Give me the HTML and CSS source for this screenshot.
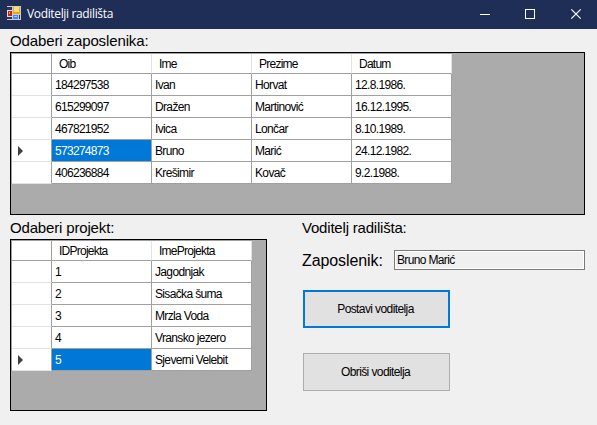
FILE: index.html
```html
<!DOCTYPE html>
<html lang="hr">
<head>
<meta charset="utf-8">
<title>Voditelji radilišta</title>
<link rel="stylesheet" href="styles.css">
</head>
<body>
<header class="titlebar">
  <svg class="app-icon" width="14" height="14" viewBox="0 0 14 14" shape-rendering="crispEdges">
    <rect width="14" height="14" fill="#c9cdd8"/>
    <path d="M0 1h5v3H0zM0 11h5v2H0z" fill="#26345f"/>
    <rect x="0" y="4" width="5" height="7" fill="#f3d5d2"/>
    <rect x="1" y="5" width="4" height="5" fill="#c32318"/>
    <rect x="2" y="6" width="1" height="2" fill="#ef9a90"/>
    <rect x="6" y="1" width="7" height="7" fill="#e8a914"/>
    <rect x="7" y="1" width="5" height="5" fill="#ffdf75"/>
    <rect x="6" y="9" width="5" height="4" fill="#4d86e8"/>
    <rect x="7" y="10" width="3" height="1" fill="#a5c8ff"/>
    <path d="M12 9h1v4h-1z" fill="#26345f"/>
  </svg>
  <h1 class="caption">Voditelji radilišta</h1>
  <svg class="controls" width="116" height="12" viewBox="0 0 116 12" fill="none" stroke="#fff">
    <path d="M0 6.5h10M45.5 1.5h9v9h-9z" shape-rendering="crispEdges"/>
    <path d="M91.3 1.3l9.4 9.4M100.7 1.3l-9.4 9.4" stroke-width="1.2"/>
  </svg>
</header>
<main class="form">
  <h2 class="label label-employees">Odaberi zaposlenika:</h2>
  <section class="grid-box employees">
    <div class="grid cols-4">
      <div class="head corner"></div><div class="head">Oib</div><div class="head">Ime</div><div class="head">Prezime</div><div class="head">Datum</div>
      <div class="rowhead"></div><div class="cell num">184297538</div><div class="cell">Ivan</div><div class="cell">Horvat</div><div class="cell date">12.8.1986.</div>
      <div class="rowhead"></div><div class="cell num">615299097</div><div class="cell">Dražen</div><div class="cell">Martinović</div><div class="cell date">16.12.1995.</div>
      <div class="rowhead"></div><div class="cell num">467821952</div><div class="cell">Ivica</div><div class="cell">Lončar</div><div class="cell date">8.10.1989.</div>
      <div class="rowhead current"></div><div class="cell num selected">573274873</div><div class="cell">Bruno</div><div class="cell">Marić</div><div class="cell date">24.12.1982.</div>
      <div class="rowhead"></div><div class="cell num">406236884</div><div class="cell">Krešimir</div><div class="cell">Kovač</div><div class="cell date">9.2.1988.</div>
    </div>
  </section>
  <div class="lower">
    <div class="projects-pane">
      <h2 class="label label-projects">Odaberi projekt:</h2>
      <section class="grid-box projects">
        <div class="grid cols-2">
          <div class="head corner"></div><div class="head">IDProjekta</div><div class="head">ImeProjekta</div>
          <div class="rowhead"></div><div class="cell num">1</div><div class="cell">Jagodnjak</div>
          <div class="rowhead"></div><div class="cell num">2</div><div class="cell">Sisačka šuma</div>
          <div class="rowhead"></div><div class="cell num">3</div><div class="cell">Mrzla Voda</div>
          <div class="rowhead"></div><div class="cell num">4</div><div class="cell">Vransko jezero</div>
          <div class="rowhead current"></div><div class="cell num selected">5</div><div class="cell">Sjeverni Velebit</div>
        </div>
      </section>
    </div>
    <div class="leader-pane">
      <h2 class="label label-leader">Voditelj radilišta:</h2>
      <div class="field">
        <label class="field-label" for="leader">Zaposlenik:</label>
        <output class="textbox" id="leader">Bruno Marić</output>
      </div>
      <button class="button primary">Postavi voditelja</button>
      <button class="button">Obriši voditelja</button>
    </div>
  </div>
</main>
</body>
</html>
```
FILE: styles.css
```css
* { box-sizing: border-box; }
body {
  margin: 0;
  width: 597px;
  height: 425px;
  overflow: hidden;
  background: #f0f0f0;
  color: #000;
  font: 12px/14px "Liberation Sans", Arial, sans-serif;
  letter-spacing: -0.65px;
}
h1, h2 { margin: 0; font-weight: normal; }
.titlebar {
  display: flex;
  align-items: center;
  height: 29px;
  padding: 0 1px 2px 7px;
  background: #1f2e57;
  color: #fff;
}
.app-icon { margin-bottom: 1px; }
.caption {
  margin-left: 6px;
  font: 12px/16px "Open Sans", "Noto Sans", sans-serif;
  letter-spacing: -0.35px;
}
.controls { margin-left: auto; }
.form { padding: 0 12px 0 10px; }
.label {
  height: 24px;
  font-size: 15px;
  line-height: 25px;
  letter-spacing: -0.12px;
  white-space: nowrap;
}
.label-employees { height: 23px; line-height: 23px; }
.label-projects { letter-spacing: -0.16px; }
.label-leader { letter-spacing: -0.2px; }
.grid-box {
  border: 1px solid #000;
  background: #ababab;
}
.employees { height: 163px; }
.projects { width: 257px; height: 172px; }
.grid {
  display: grid;
  grid-auto-rows: 22px;
  width: max-content;
  border-top: 1px solid #a0a0a0;
  border-left: 1px solid #a0a0a0;
}
.cols-4 { grid-template: 20px / 40px repeat(4, 100px); }
.cols-2 { grid-template: 20px / 40px repeat(2, 100px); }
.head, .cell, .rowhead {
  background: #fff;
  border-right: 1px solid #a0a0a0;
  border-bottom: 1px solid #a0a0a0;
  white-space: nowrap;
}
.head { padding: 3px 0 0 7px; border-right-color: #e3e3e3; letter-spacing: -0.75px; }
.head.corner { border-right-color: #a0a0a0; }
.rowhead { border-bottom-color: #e3e3e3; }
.cell { padding: 4px 0 0 3px; }
.num { letter-spacing: -0.7px; }
.selected { background: #0078d7; color: #fff; }
.current::before {
  content: "";
  display: block;
  margin: 6px 0 0 6px;
  width: 5px;
  height: 10px;
  background: #404040;
  clip-path: polygon(0 0, 100% 50%, 0 100%);
}
.lower {
  display: grid;
  grid-template-columns: 292px 283px;
}
.field {
  display: flex;
  align-items: center;
  height: 20px;
  margin-top: 11px;
}
.field-label {
  width: 92px;
  padding-top: 1px;
  font-size: 16px;
  line-height: 20px;
  letter-spacing: -0.1px;
}
.textbox {
  flex: 1;
  height: 20px;
  padding: 2px 2px 0;
  border: 1px solid #7a7a7a;
  box-shadow: inset 0 0 0 1px #fff;
}
.button {
  display: block;
  width: 147px;
  height: 38px;
  margin: 20px 0 0 1px;
  padding: 0 2px 0 0;
  border: 1px solid #adadad;
  background: #e1e1e1;
  color: #000;
  font: inherit;
  letter-spacing: -0.6px;
}
.primary { border: 2px solid #0078d7; }
.primary + .button { margin-top: 25px; }
```
